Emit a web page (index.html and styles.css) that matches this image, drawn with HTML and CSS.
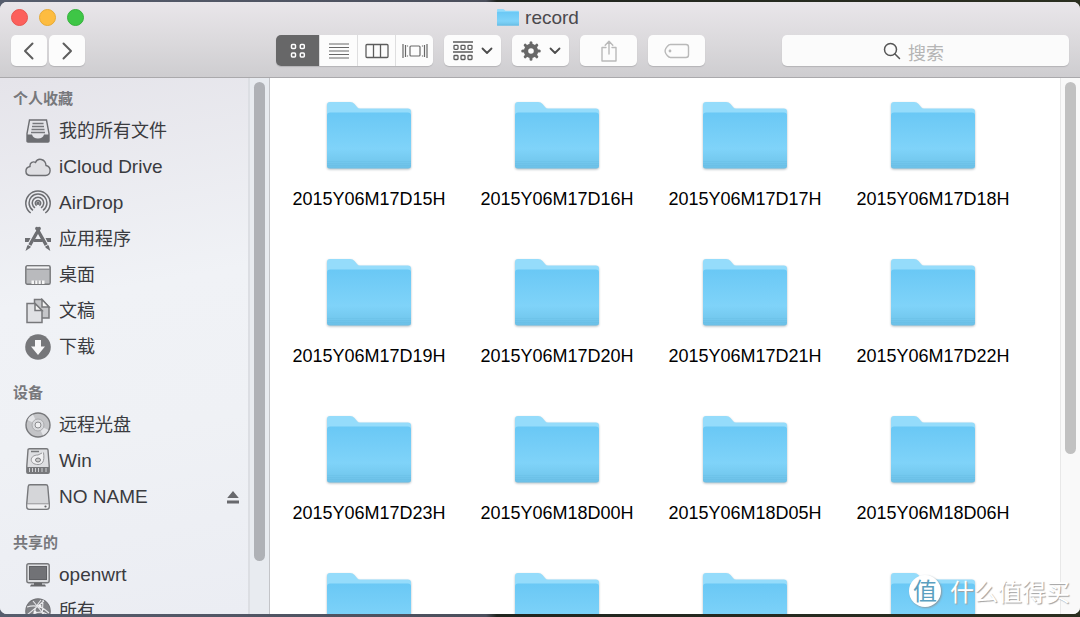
FILE: index.html
```
<!DOCTYPE html>
<html lang="zh-CN">
<head>
<meta charset="utf-8">
<title>record</title>
<link rel="stylesheet" href="styles.css">
</head>
<body>
<svg class="defs" aria-hidden="true">
  <defs>
    <linearGradient id="folder-front" x1="0" y1="0" x2="0" y2="1">
      <stop offset="0" stop-color="#6ac8f5"/>
      <stop offset=".65" stop-color="#7fd3f9"/>
      <stop offset=".86" stop-color="#74c9ef"/>
      <stop offset="1" stop-color="#6bbfe6"/>
    </linearGradient>
    <symbol id="folder" viewBox="0 0 84 67">
      <path fill="#95dcfb" d="M0 3Q0 0 3 0H23Q26 0 27.500 2L30 5Q31 6.500 33 6.500H81Q84 6.500 84 9.500V30H0Z"/>
      <path fill="url(#folder-front)" d="M0 13.500Q0 10.500 3 10.500H81Q84 10.500 84 13.500V64Q84 66.500 81 66.500H3Q0 66.500 0 64Z"/>
      <path stroke="#63b8df" stroke-width=".6" opacity=".5" d="M0 59.500H84M0 61.500H84M0 63.500H84"/>
    </symbol>
    <symbol id="chevron" viewBox="0 0 12 8"><path d="M1.500 1.500L6 6L10.500 1.500" fill="none" stroke="#4c4c4c" stroke-width="1.800" stroke-linecap="round" stroke-linejoin="round"/></symbol>
  </defs>
</svg>
<div class="window">
  <header class="toolbar">
    <div class="titlebar">
      <div class="lights">
        <button class="light close" aria-label="关闭"></button>
        <button class="light minimize" aria-label="最小化"></button>
        <button class="light zoom" aria-label="缩放"></button>
      </div>
      <h1 class="title"><svg class="title-icon" viewBox="0 0 84 67" preserveAspectRatio="none"><use href="#folder"/></svg>record</h1>
    </div>
    <div class="controls">
      <div class="nav">
        <button class="btn nav-btn" aria-label="后退"><svg width="12" height="18" viewBox="0 0 12 18"><path class="line-dark" d="M9.500 1.500L2 9L9.500 16.500"/></svg></button>
        <button class="btn nav-btn" aria-label="前进"><svg width="12" height="18" viewBox="0 0 12 18"><path class="line-dark" d="M2.500 1.500L10 9L2.500 16.500"/></svg></button>
      </div>
      <div class="views">
        <button class="seg selected" aria-label="图标"><svg width="16" height="16" viewBox="0 0 16 16" fill="none" stroke="#fff" stroke-width="1.500"><rect x="1.500" y="1.500" width="4" height="4" rx="1"/><rect x="10.300" y="1.500" width="4" height="4" rx="1"/><rect x="1.500" y="10" width="4" height="4" rx="1"/><rect x="10.300" y="10" width="4" height="4" rx="1"/></svg></button>
        <button class="seg" aria-label="列表"><svg width="20" height="16" viewBox="0 0 20 16"><path stroke="#686868" stroke-width="1.200" d="M0 1H20M0 4.500H20M0 8H20M0 11.500H20M0 15H20"/></svg></button>
        <button class="seg" aria-label="分栏"><svg width="24" height="16" viewBox="0 0 24 16" fill="none" stroke="#5c5c5c" stroke-width="1.300"><rect x="1" y="1.500" width="22" height="13" rx="1"/><path d="M8.500 1.500V14.500M15.500 1.500V14.500"/></svg></button>
        <button class="seg" aria-label="Cover Flow"><svg width="26" height="16" viewBox="0 0 26 16" fill="none" stroke="#686868" stroke-width="1.200"><rect x="8" y="3" width="10" height="10" rx="1"/><path d="M1 1V15M3.500 2V14M22.500 2V14M25 1V15M5.500 2.500V3.500M5.500 12.500V13.500M20.500 2.500V3.500M20.500 12.500V13.500"/></svg></button>
      </div>
      <button class="btn tool" aria-label="排列方式"><svg width="20" height="20" viewBox="0 0 20 20" fill="none" stroke="#5c5c5c" stroke-width="1.300"><path d="M0 1H20M0 11H20"/><rect x="1" y="4.300" width="4" height="4" rx=".8"/><rect x="8" y="4.300" width="4" height="4" rx=".8"/><rect x="15" y="4.300" width="4" height="4" rx=".8"/><rect x="1" y="14.500" width="4" height="4" rx=".8"/><rect x="8" y="14.500" width="4" height="4" rx=".8"/><rect x="15" y="14.500" width="4" height="4" rx=".8"/></svg><svg width="12" height="8"><use href="#chevron"/></svg></button>
      <button class="btn tool" aria-label="操作"><svg width="20" height="20" viewBox="0 0 20 20"><circle cx="10" cy="10" r="5" fill="none" stroke="#686868" stroke-width="4.400"/><g stroke="#686868" stroke-width="3" stroke-linecap="round"><path d="M10 1.700V4M10 16V18.300M1.700 10H4M16 10H18.300M4.200 4.200L6 6M14 14L15.800 15.800M4.200 15.800L6 14M14 6L15.800 4.200"/></g></svg><svg width="12" height="8"><use href="#chevron"/></svg></button>
      <button class="btn tool" aria-label="共享"><svg width="18" height="22" viewBox="0 0 18 22" fill="none" stroke="#b9b9b9" stroke-width="1.400" stroke-linejoin="round" stroke-linecap="round"><path d="M6 7.500H2V21H16V7.500H12M9 14V1.500M5.200 5.200L9 1.300L12.800 5.200"/></svg></button>
      <button class="btn tool" aria-label="编辑标记"><svg width="26" height="16" viewBox="0 0 26 16"><path d="M6.500 1.500H22Q24.500 1.500 24.500 4V12Q24.500 14.500 22 14.500H6.500Q4.800 14.500 3.500 12.800L1.700 10.300Q.5 8 1.700 5.700L3.500 3.200Q4.800 1.500 6.500 1.500Z" fill="none" stroke="#b9b9b9" stroke-width="1.400"/><circle cx="6" cy="8" r="1.400" fill="#b9b9b9"/></svg></button>
      <label class="search"><svg width="18" height="18" viewBox="0 0 18 18" fill="none" stroke="#555" stroke-width="1.500" stroke-linecap="round"><circle cx="7.500" cy="7.500" r="6"/><path d="M12 12L16.500 16.500"/></svg><input type="text" placeholder="搜索" aria-label="搜索"></label>
    </div>
  </header>
  <div class="body">
    <nav class="sidebar">
      <h2 class="group">个人收藏</h2>
      <ul class="places">
        <li><a class="place" href="#all"><svg class="icon" viewBox="0 0 26 26"><path d="M4.500 2H21.500L24 15.500V23Q24 24 23 24H3Q2 24 2 23V15.500Z" fill="#e4e4e8" stroke="#6d6e72" stroke-width="1.400"/><path d="M2 16.500H7Q8 20.500 13 20.500T19 16.500H24V24H2Z" fill="#6d6e72"/><path d="M7.500 5.500H18.500M7 8.500H19M6.500 11.500H19.500M6 14.500H20" stroke="#77787c" stroke-width="1.400"/></svg>我的所有文件</a></li>
        <li><a class="place latin" href="#icloud"><svg class="icon" viewBox="0 0 26 26"><path d="M5.500 21.500C-.5 21.500-.5 13.500 5 12.500C4.500 8.500 8.500 7 10.500 8.500C12.500 3.500 20.500 4.500 21 11.500C27 13 26 21.500 20.500 21.500Z" fill="#dfdfe3" stroke="#6d6e72" stroke-width="1.400"/></svg>iCloud Drive</a></li>
        <li><a class="place latin" href="#airdrop"><svg class="icon" viewBox="0 0 26 26" fill="none" stroke="#6d6e72" stroke-width="1.500"><path d="M5.700 23A12.200 12.200 0 1 1 20.300 23M8 20.300A8.900 8.900 0 1 1 18 20.300M10 17.800A5.700 5.700 0 1 1 16 17.800"/><path d="M11.700 15.500A2.700 2.700 0 1 1 14.300 15.500"/><circle cx="13" cy="13.200" r="1" fill="#6d6e72"/></svg>AirDrop</a></li>
        <li><a class="place" href="#apps"><svg class="icon" viewBox="0 0 26 26"><path d="M0 12H5.500L3.500 16H0ZM20.500 12H26V16H22.500ZM9.500 13H16.500L18 16H8.500Z" fill="#6d6e72"/><path d="M14.200 2.500L4 20.500M11.800 2.500L22 20.500" stroke="#6d6e72" stroke-width="3.400" stroke-linecap="round"/><path d="M2.300 19.500L.5 25L5.500 21.500ZM20.500 21.500L25.300 25L23.800 19.500Z" fill="#6d6e72"/><path d="M3 18.500L6.500 20.500M19.500 20.500L23 18.500M11 4L9 6.500" stroke="#f0f1f5"/></svg>应用程序</a></li>
        <li><a class="place" href="#desktop"><svg class="icon" viewBox="0 0 26 26"><rect x=".8" y="3.800" width="24.400" height="18.400" rx="1.500" fill="#b9babd" stroke="#77787b" stroke-width="1.400"/><path d="M2 5.500H24" stroke="#f3f3f4" stroke-width="2"/><path d="M1 7.300H25" stroke="#85868a"/><path d="M6.500 18.500H19.500V22H6.500Z" fill="#f6f6f6"/><path d="M9.700 18.500V22M13 18.500V22M16.300 18.500V22" stroke="#85868a"/></svg>桌面</a></li>
        <li><a class="place" href="#documents"><svg class="icon" viewBox="0 0 26 26" stroke="#77787b" stroke-width="1.500"><path d="M9.500 1.500H17L24 9V20H9.500Z" fill="#c5c6c9"/><path d="M17 1.500V9H24Z" fill="#f5f5f5"/><path d="M2 5.500H10L17 12.500V24.500H2Z" fill="#e0e1e4"/><path d="M10 5.500V12.500H17Z" fill="#f5f5f5"/></svg>文稿</a></li>
        <li><a class="place" href="#downloads"><svg class="icon" viewBox="0 0 26 26"><circle cx="13" cy="13" r="12.800" fill="#76777a"/><path d="M10 6H16V12.500H20L13 21L6 12.500H10Z" fill="#f7f7f8"/></svg>下载</a></li>
      </ul>
      <h2 class="group">设备</h2>
      <ul class="places">
        <li><a class="place" href="#disc"><svg class="icon" viewBox="0 0 26 26"><circle cx="13" cy="13" r="12" fill="#c3c4c7" stroke="#77787b" stroke-width="1.400"/><path d="M13 13L2.500 8A11.500 11.500 0 0 1 8 2.500ZM13 13L23.500 18A11.500 11.500 0 0 1 18 23.500Z" fill="#e4e5e8"/><circle cx="13" cy="13" r="6" fill="#d9dadd" stroke="#aaabae"/><circle cx="13" cy="13" r="3" fill="#efeff1" stroke="#8b8c8f"/></svg>远程光盘</a></li>
        <li><a class="place latin" href="#win"><svg class="icon" viewBox="0 0 26 26"><path d="M4.500 .8H21.500Q23 .8 23 2L24.200 18V24Q24.200 25.300 23 25.300H3Q1.800 25.300 1.800 24V18L3 2Q3 .8 4.500 .8Z" fill="#dedfe2" stroke="#77787b" stroke-width="1.400"/><path d="M2 19H24V25H2Z" fill="#77787b"/><path d="M4.500 20V24M7.500 20V24M10.500 20V24M13.500 20V24M17 20V24M21 20V24" stroke="#d0d1d4"/><path d="M6 3.500H14" stroke="#77787b" stroke-width="1.500"/><path d="M18.500 4.500C20 14 17 16.500 13 16.500C4 16.500 4 7 13 7L17 5" fill="#f0f0f2" stroke="#97989b"/><ellipse cx="13" cy="12" rx="2.500" ry="2" fill="#ccc" stroke="#77787b"/></svg>Win</a></li>
        <li class="with-eject"><a class="place latin" href="#noname"><svg class="icon" viewBox="0 0 26 26"><path d="M5 .8H21Q22.600 .8 22.800 2.500L24.200 19V23Q24.200 25.200 22 25.200H4Q1.800 25.200 1.800 23V19L3.200 2.500Q3.400 .8 5 .8Z" fill="#d5d6d9" stroke="#77787b" stroke-width="1.400"/><path d="M2.500 20H23.500V22.500Q23.500 24.500 21.500 24.500H4.500Q2.500 24.500 2.500 22.500Z" fill="#f0f0f2"/><path d="M2 19.800H24" stroke="#97989b"/><circle cx="20.500" cy="22.500" r="1.100" fill="#66676a"/></svg>NO NAME</a><button class="eject" aria-label="推出"><svg width="12" height="13" viewBox="0 0 12 13" fill="#68696d"><path d="M6 0L11.800 7H.2ZM0 9.500H12V12.500H0Z"/></svg></button></li>
      </ul>
      <h2 class="group">共享的</h2>
      <ul class="places">
        <li><a class="place latin" href="#openwrt"><svg class="icon" viewBox="0 0 26 26"><rect x="1.800" y="1.800" width="22.400" height="19" rx="2" fill="#dcdde0" stroke="#77787b" stroke-width="1.400"/><rect x="4.500" y="4.500" width="17" height="13" fill="#717276" stroke="#5f6064"/><path d="M9 20.800H17V22.500H20L21 24.500H5L6 22.500H9Z" fill="#66676a"/></svg>openwrt</a></li>
        <li><a class="place" href="#network"><svg class="icon" viewBox="0 0 26 26"><circle cx="13" cy="13" r="12.200" fill="#808185" stroke="#737478" stroke-width="1.200"/><path d="M2 17L19 3M8 3L22 20M2 9Q14 5 24 15M16 2Q7 12 9 25M3 20Q14 10 23 17M18 2L17 24" fill="none" stroke="#e6e7ea" stroke-width="1.100"/><circle cx="15" cy="8" r="1.500" fill="#f1f1f3"/><circle cx="10" cy="14" r="1.500" fill="#f1f1f3"/></svg>所有</a></li>
      </ul>
    </nav>
    <div class="track side-track"><div class="thumb side-thumb"></div></div>
    <main class="content">
      <ul class="files">
        <li class="file"><svg class="folder"><use href="#folder"/></svg>2015Y06M17D15H</li>
        <li class="file"><svg class="folder"><use href="#folder"/></svg>2015Y06M17D16H</li>
        <li class="file"><svg class="folder"><use href="#folder"/></svg>2015Y06M17D17H</li>
        <li class="file"><svg class="folder"><use href="#folder"/></svg>2015Y06M17D18H</li>
        <li class="file"><svg class="folder"><use href="#folder"/></svg>2015Y06M17D19H</li>
        <li class="file"><svg class="folder"><use href="#folder"/></svg>2015Y06M17D20H</li>
        <li class="file"><svg class="folder"><use href="#folder"/></svg>2015Y06M17D21H</li>
        <li class="file"><svg class="folder"><use href="#folder"/></svg>2015Y06M17D22H</li>
        <li class="file"><svg class="folder"><use href="#folder"/></svg>2015Y06M17D23H</li>
        <li class="file"><svg class="folder"><use href="#folder"/></svg>2015Y06M18D00H</li>
        <li class="file"><svg class="folder"><use href="#folder"/></svg>2015Y06M18D05H</li>
        <li class="file"><svg class="folder"><use href="#folder"/></svg>2015Y06M18D06H</li>
        <li class="file"><svg class="folder"><use href="#folder"/></svg></li>
        <li class="file"><svg class="folder"><use href="#folder"/></svg></li>
        <li class="file"><svg class="folder"><use href="#folder"/></svg></li>
        <li class="file"><svg class="folder"><use href="#folder"/></svg></li>
      </ul>
    </main>
    <div class="track"><div class="thumb main-thumb"></div></div>
  </div>
</div>
<div class="watermark"><span class="badge">值</span><span class="brand">什么值得买</span></div>
</body>
</html>
```
FILE: styles.css
```
* {
  box-sizing: border-box;
}

body {
  margin: 0;
  height: 100vh;
  padding: 2px 0 3px;
  overflow: hidden;
  position: relative;
  background: linear-gradient(90deg, #565d6d, #4b4f5c 45%, #20251f 46%, #2b2f20);
  font-family: "Liberation Sans", "Noto Sans CJK SC", sans-serif;
  color: #3a3b3f;
}

svg {
  display: block;
  flex: none;
}

.defs {
  position: absolute;
  width: 0;
  height: 0;
}

ul {
  list-style: none;
  margin: 0;
  padding: 0;
}

button {
  border: 0;
  padding: 0;
  font: inherit;
}

.window {
  height: 100%;
  display: flex;
  flex-direction: column;
  border-radius: 7px;
  overflow: hidden;
  background: #fff;
}

.toolbar {
  flex: none;
  padding: 0 11px 11px;
  border-bottom: 1px solid #aaa9ac;
  background: linear-gradient(#e9e6ea, #dcdadd 50%, #cecdd0);
}

.titlebar {
  display: grid;
  grid-template-columns: 1fr auto 1fr;
  align-items: center;
  height: 31px;
  margin-bottom: 2px;
}

.lights {
  display: flex;
  gap: 11px;
}

.light {
  width: 17px;
  height: 17px;
  border-radius: 50%;
}

.close {
  background: #fc605c;
  border: 1px solid #e8554f;
}

.minimize {
  background: #fdbc40;
  border: 1px solid #e6a935;
}

.zoom {
  background: #3ec646;
  border: 1px solid #35b13c;
}

.title {
  display: flex;
  align-items: center;
  gap: 6px;
  margin: 0;
  padding-right: 4px;
  font-size: 19px;
  font-weight: 400;
  line-height: 24px;
  color: #4a494d;
}

.title-icon {
  width: 22px;
  height: 17px;
}

.controls {
  display: flex;
  gap: 11px;
  height: 31px;
}

.nav {
  flex: 0 0 254px;
  display: flex;
  gap: 2px;
}

.btn,
.seg {
  display: flex;
  align-items: center;
  justify-content: center;
  background: #fcfcfc;
}

.btn {
  border-radius: 5px;
  box-shadow: 0 1px 1px #b4b3b6;
}

.nav-btn {
  width: 36px;
}

.line-dark {
  fill: none;
  stroke: #5e5e5e;
  stroke-width: 2;
  stroke-linecap: round;
  stroke-linejoin: round;
}

.views {
  display: flex;
  border-radius: 5px;
  overflow: hidden;
  box-shadow: 0 1px 1px #b4b3b6;
}

.seg {
  width: 38px;
  border-left: 1px solid #dededf;
}

.selected {
  width: 43px;
  border-left: 0;
  background: #676768;
}

.tool {
  width: 57px;
  gap: 8px;
}

.search {
  width: 287px;
  margin-left: auto;
  display: flex;
  align-items: center;
  justify-content: center;
  gap: 7px;
  border-radius: 5px;
  background: #fbfbfb;
  box-shadow: 0 1px 1px #b4b3b6;
}

.search input {
  width: 60px;
  height: 31px;
  padding: 2px 0 0;
  border: 0;
  outline: 0;
  background: transparent;
  font: 18px "Noto Sans CJK SC", sans-serif;
  color: #444;
}

.search input::placeholder {
  color: #b5b5b5;
}

.body {
  flex: 1;
  min-height: 0;
  display: grid;
  grid-template-columns: 248px 22px 1fr 20px;
  grid-template-rows: minmax(0, 1fr);
}

.sidebar {
  overflow: hidden;
  padding-top: 7px;
  background: linear-gradient(170deg, #e5e4ea, #f0f2f6 40%, #eff1f5 65%, #ebedf3);
}

.group {
  margin: 0;
  padding-left: 13px;
  font-size: 15px;
  font-weight: 700;
  line-height: 28px;
  color: #77787c;
}

.places + .group {
  margin-top: 14px;
}

.place {
  display: flex;
  align-items: center;
  gap: 8px;
  height: 36px;
  padding-left: 25px;
  font-size: 18px;
  line-height: 20px;
  color: inherit;
  text-decoration: none;
}

.latin {
  font-size: 19px;
}

.icon {
  width: 26px;
  height: 26px;
}

.with-eject {
  display: flex;
  align-items: center;
  justify-content: space-between;
  padding-right: 9px;
}

.eject {
  background: transparent;
}

.track {
  padding: 4px 4px 0;
  background: #f9f9f9;
  border-left: 1px solid #e8e8e8;
}

.side-track {
  background: #e8ebf0;
  border-left: 2px solid #dcdee3;
  border-right: 1px solid #c3c4c8;
}

.thumb {
  width: 11px;
  border-radius: 6px;
  background: #c1c1c1;
}

.side-thumb {
  height: 90%;
  background: #afb1b6;
}

.main-thumb {
  height: 70%;
}

.content {
  overflow: hidden;
  padding: 24px 0 0 5px;
}

.files {
  display: grid;
  grid-template-columns: repeat(auto-fill, 188px);
  grid-auto-rows: 157px;
}

.file {
  display: flex;
  flex-direction: column;
  align-items: center;
  gap: 19px;
  font-size: 18px;
  line-height: 22px;
  color: #000;
}

.folder {
  width: 84px;
  height: 67px;
  filter: drop-shadow(0 1px 1px #b4bdc2);
}

.watermark {
  position: absolute;
  right: 10px;
  bottom: 10px;
  display: flex;
  align-items: center;
  gap: 9px;
  font-family: "Noto Sans CJK SC", sans-serif;
}

.badge {
  width: 32px;
  height: 32px;
  border-radius: 50%;
  background: #fff;
  box-shadow: 1px 1px 2px #8a9aa3;
  font-size: 24px;
  line-height: 30px;
  text-align: center;
  color: #5b9fc0;
}

.brand {
  font-size: 24px;
  line-height: 30px;
  color: #fff;
  text-shadow: 1px 1px 1px #a0a0a0;
}
```
